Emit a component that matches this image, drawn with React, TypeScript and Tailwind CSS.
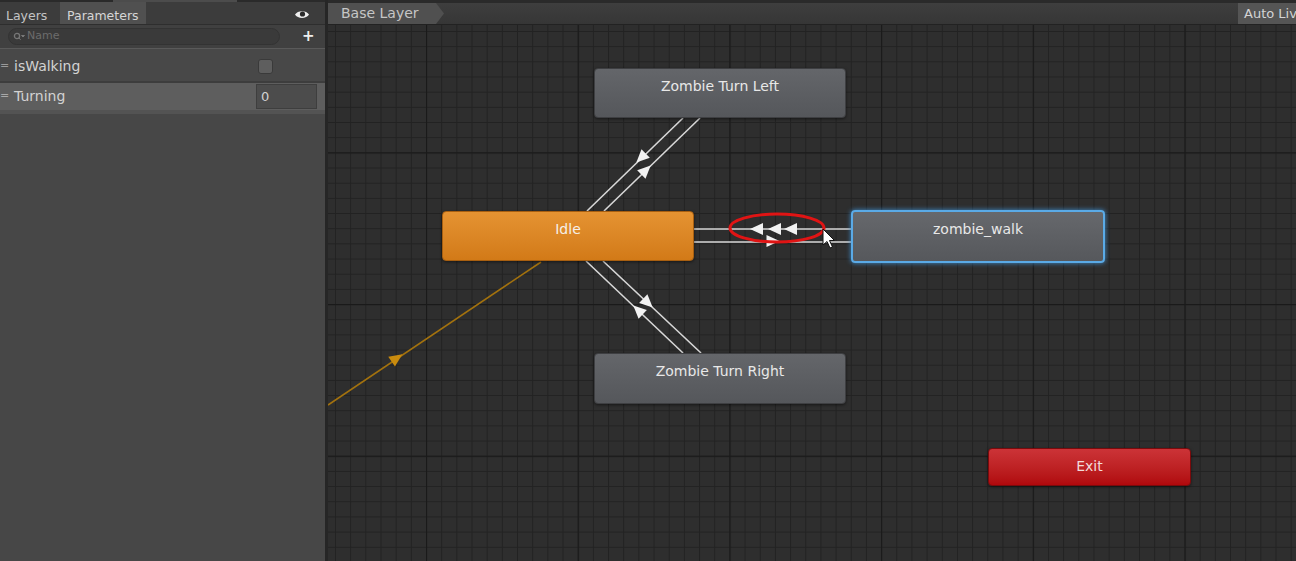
import React from "react";

// arrowhead centred on (x, y), pointing along angle (degrees)
const Arrow = ({ x, y, a, fill = "#f2f2f2", s = 1 }: { x: number; y: number; a: number; fill?: string; s?: number }) => (
  <polygon points="6.5,0 -6.5,-6 -6.5,6" fill={fill} transform={`translate(${x} ${y}) rotate(${a}) scale(${s})`} />
);

const Node = ({ label, className }: { label: string; className: string }) => (
  <div className={`absolute rounded-[4px] pt-[9px] text-center text-[14px] leading-[16px] ${className}`}>{label}</div>
);

const Graph = () => (
  <div className="relative flex-1 overflow-hidden bg-[#2e2e2e]">
    <svg className="absolute inset-0" width="968" height="536">
      <defs>
        <pattern id="minor" patternUnits="userSpaceOnUse" x="6.98" y="6" width="15.17" height="15.17">
          <path d="M0.5 0V15.17M0 0.5H15.17" stroke="#222222" strokeWidth="1" fill="none" />
        </pattern>
        <pattern id="major" patternUnits="userSpaceOnUse" x="98" y="127.3" width="151.7" height="151.7">
          <path d="M0.5 0V151.7M0 0.5H151.7" stroke="#1a1a1a" strokeWidth="1.3" fill="none" />
        </pattern>
      </defs>
      <rect width="968" height="536" fill="url(#minor)" />
      <rect width="968" height="536" fill="url(#major)" />

      {/* entry transition */}
      <line x1="0" y1="380" x2="213" y2="237" stroke="#a3720e" strokeWidth="1.6" />
      <Arrow x={69} y={333} a={-33.9} fill="#c98b0e" />

      {/* transitions */}
      <g stroke="#d8d8d8" strokeWidth="1.6">
        <line x1="259" y1="186" x2="355" y2="93" />
        <line x1="276" y1="186" x2="372" y2="93" />
        <line x1="258" y1="236" x2="355" y2="328" />
        <line x1="275" y1="236" x2="373" y2="328" />
        <line x1="366" y1="204" x2="523" y2="204" />
        <line x1="366" y1="217" x2="523" y2="217" />
      </g>
      <Arrow x={313} y={133} a={135.9} />
      <Arrow x={318} y={145} a={-44.1} />
      <Arrow x={310} y={285} a={-136.5} />
      <Arrow x={320} y={278} a={43.2} />
      <Arrow x={445} y={216} a={0} />
      <Arrow x={428.5} y={204} a={180} />
      <Arrow x={446.5} y={204} a={180} />
      <Arrow x={462.5} y={204} a={180} />

      <ellipse cx="449" cy="203" rx="47" ry="14" fill="none" stroke="#e01414" strokeWidth="3" />

      {/* mouse pointer */}
      <path
        d="M0 0L0 16L4 12.5L7 19L9.5 18L6.5 11.5L11.5 11.5Z"
        transform="translate(495 204)"
        fill="#ffffff"
        stroke="#111111"
        strokeWidth="1"
        strokeLinejoin="round"
      />
    </svg>

    <Node
      label="Zombie Turn Left"
      className="left-[266px] top-[43px] h-[50px] w-[252px] border border-[#3e3f42] bg-gradient-to-b from-[#64666a] to-[#55575b] text-[#e8e8e8] shadow-[0_1px_3px_rgba(0,0,0,0.5)]"
    />
    <Node
      label="Idle"
      className="left-[114px] top-[186px] h-[50px] w-[252px] border border-[#a85f10] bg-gradient-to-b from-[#e59332] to-[#d27a17] text-[#f6f0e8] shadow-[0_1px_3px_rgba(0,0,0,0.5)]"
    />
    <Node
      label="zombie_walk"
      className="left-[523px] top-[185px] h-[53px] w-[254px] border-2 border-[#5aaae6] bg-gradient-to-b from-[#66686c] to-[#56585c] text-[#e8e8e8] shadow-[0_0_5px_#3f8fd0]"
    />
    <Node
      label="Zombie Turn Right"
      className="left-[266px] top-[328px] h-[51px] w-[252px] border border-[#3e3f42] bg-gradient-to-b from-[#64666a] to-[#55575b] text-[#e8e8e8] shadow-[0_1px_3px_rgba(0,0,0,0.5)]"
    />
    <Node
      label="Exit"
      className="left-[660px] top-[423px] h-[38px] w-[203px] border border-[#7a0a0c] bg-gradient-to-b from-[#cc3337] to-[#b0080c] text-[#f2dada] shadow-[0_1px_3px_rgba(0,0,0,0.5)]"
    />
  </div>
);

const Parameters = () => (
  <aside className="flex w-[325px] flex-col bg-[#474747] text-[#d2d2d2]">
    <div className="h-[2px] bg-[#2a2a2a]">
      <div className="ml-[113px] h-full w-[124px] bg-[#4c4c4c]" />
    </div>
    <div className="flex h-[23px] items-stretch border-b border-[#2e2e2e] bg-[#3c3c3c] text-[12.5px] leading-[16px]">
      <div className="flex w-[60px] items-center pl-[6px] pt-[5px] text-[#c4c4c4]">Layers</div>
      <div className="flex w-[86px] items-center bg-[#505050] pl-[7px] pt-[5px] text-[#d6d6d6]">Parameters</div>
      <div className="flex flex-1 items-center justify-end pr-[15px] pt-[2px]">
        <svg width="16" height="11" viewBox="0 0 16 11">
          <path d="M1 5.5C3.5 1 12.5 1 15 5.5C12.5 10 3.5 10 1 5.5Z" fill="#eeeeee" />
          <circle cx="8.5" cy="5" r="2.6" fill="#2a2a2a" />
        </svg>
      </div>
    </div>
    <div className="flex h-[24px] items-center border-b border-[#5a5a5a] bg-[#404040] pl-[8px]">
      <div className="flex h-[17px] w-[272px] items-center gap-[2px] rounded-full border border-[#333333] bg-[#3a3a3a] pl-[4px] text-[11px] text-[#6c6c6c]">
        <svg width="12" height="10" viewBox="0 0 12 10">
          <circle cx="4" cy="4" r="2.6" stroke="#777777" strokeWidth="1.3" fill="none" />
          <path d="M5.8 5.8L7.6 7.8M8.5 3.5H11.5L10 5Z" stroke="#777777" strokeWidth="1" fill="#777777" />
        </svg>
        <span>Name</span>
      </div>
      <span className="ml-[22px] text-[15px] font-bold leading-none text-[#eeeeee]">+</span>
    </div>
    <div className="flex h-[34px] items-center border-b-2 border-[#3d3d3d] bg-[#484848] pt-[2px] text-[14px]">
      <span className="w-[14px] text-[11px] text-[#9a9a9a]">=</span>
      <span className="flex-1">isWalking</span>
      <span className="mr-[52px] h-[15px] w-[15px] rounded-[3px] border border-[#3a3a3a] bg-[#5e5e5e]" />
    </div>
    <div className="flex h-[31px] items-center border-b-4 border-[#535353] bg-[#5e5e5e] text-[14px]">
      <span className="w-[14px] text-[11px] text-[#a8a8a8]">=</span>
      <span className="flex-1">Turning</span>
      <span className="mr-[8px] flex h-[25px] w-[61px] items-center border border-[#3e3e3e] bg-[#4c4c4c] pl-[4px] text-[13px]">0</span>
    </div>
  </aside>
);

export default function App() {
  return (
    <div className="flex h-[561px] w-[1296px] overflow-hidden bg-[#2e2e2e] font-['DejaVu_Sans',sans-serif]">
      <Parameters />
      <div className="w-[3px] bg-[#262626]" />
      <main className="flex flex-1 flex-col overflow-hidden">
        <div className="flex h-[25px] flex-col bg-[#2a2a2a]">
          <div className="h-[3px]" />
          <div className="flex flex-1 items-stretch border-b border-[#222222] bg-gradient-to-b from-[#3e3e3e] to-[#363636]">
            <div className="flex w-[116px] items-center bg-[#505050] pl-[13px] text-[14px] text-[#c6c6c6] [clip-path:polygon(0_0,108px_0,116px_50%,108px_100%,0_100%)]">
              Base Layer
            </div>
            <div className="flex-1" />
            <div className="flex w-[58px] items-center overflow-hidden whitespace-nowrap bg-[#555555] pl-[6px] text-[13px] text-[#d4d4d4]">
              Auto Live Link
            </div>
          </div>
        </div>
        <Graph />
      </main>
    </div>
  );
}
